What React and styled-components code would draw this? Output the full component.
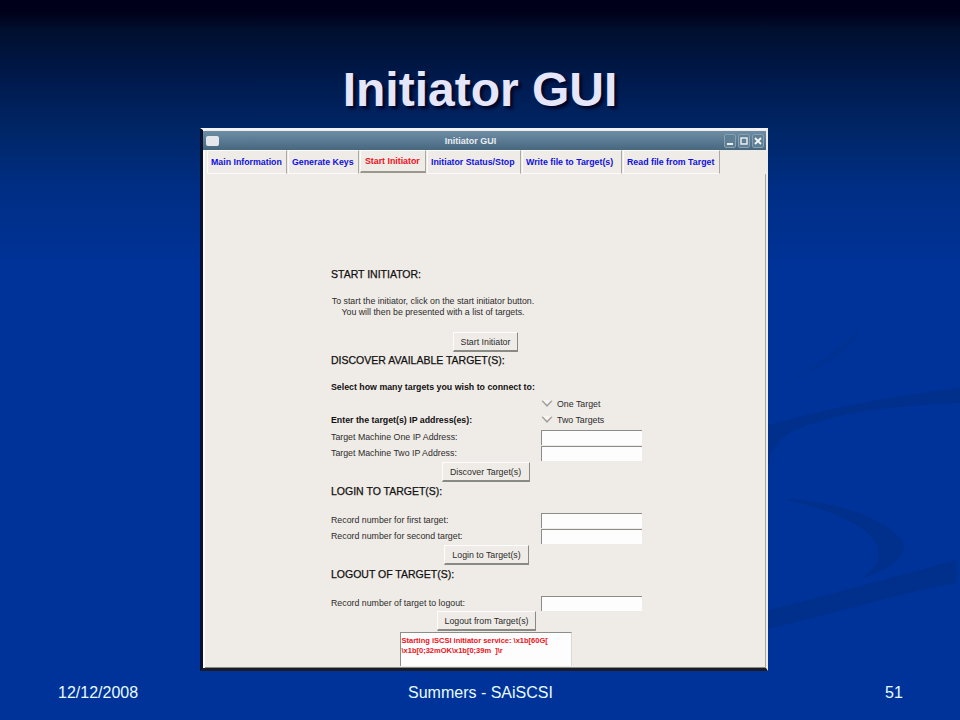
import React from "react";
import styled, { createGlobalStyle } from "styled-components";

const Global = createGlobalStyle`
  html, body { margin: 0; padding: 0; background: #003399; }
  * { box-sizing: border-box; }
`;

const Slide = styled.div`
  position: relative;
  width: 960px;
  height: 720px;
  overflow: hidden;
  display: flex;
  flex-direction: column;
  font-family: "Liberation Sans", Arial, sans-serif;
  background: linear-gradient(180deg, #00001a 0, #00001a 12px, #000f2e 30px, #001a4d 80px, #002666 130px, #002e85 190px, #003399 270px, #003399 100%);
`;
const Swirls = styled.svg`
  position: absolute;
  inset: 0;
`;
const Title = styled.h1`
  position: relative;
  margin: 0;
  height: 128px;
  padding-top: 60px;
  text-align: center;
  font-size: 48px;
  line-height: 60px;
  font-weight: 700;
  color: #e6e6fa;
  text-shadow: 3px 3px 3px #00072a;
`;
const Window = styled.div`
  position: relative;
  margin-left: 200px;
  width: 568px;
  height: 543px;
  background: #efebe6;
  border-top: 2px solid #f4f4f4;
  border-left: 3px solid #0a1030;
  border-right: 2px solid #efebe6;
  border-bottom: 3px solid #1c1c28;
  box-shadow: inset 2px 0 0 #fbfbf9, inset 0 -1px 0 #8a8a84;
  display: flex;
  flex-direction: column;
`;
const TitleBar = styled.div`
  height: 19px;
  margin-top: 1px;
  flex: none;
  display: flex;
  align-items: center;
  padding: 0 2px 0 3px;
  background: linear-gradient(180deg, #6d8ea6, #47677f);
`;
const MenuBtn = styled.div`
  width: 13px;
  height: 10px;
  border-radius: 2px;
  background: #e4e8ec;
`;
const TitleText = styled.div`
  flex: 1;
  text-align: center;
  font-size: 9px;
  font-weight: 700;
  color: #e8edf0;
`;
const WinBtn = styled.div`
  width: 12px;
  height: 14px;
  margin-left: 2px;
  border-radius: 2px;
  background: #5f7f96;
  border: 1px solid #86a0b2;
  display: flex;
  align-items: center;
  justify-content: center;
`;
const TabBar = styled.div`
  flex: none;
  height: 24px;
  display: flex;
  padding-left: 4px;
  gap: 1px;
`;
const Tab = styled.div`
  width: ${(p) => p.$w}px;
  height: ${(p) => (p.$active ? 23 : 24)}px;
  display: flex;
  align-items: center;
  padding-left: ${(p) => (p.$active ? 4 : 3)}px;
  font-size: 8.8px;
  font-weight: 700;
  white-space: nowrap;
  color: ${(p) => (p.$active ? "#f01020" : "#1010e0")};
  border-top: 1px solid #fbfbf9;
  border-left: 1px solid #fbfbf9;
  border-right: 1px solid #a8a8a4;
  border-bottom: ${(p) => (p.$active ? "2px solid #98988f" : "1px solid #fbfbf9")};
`;
const Body = styled.div`
  flex: 1;
  min-height: 0;
  margin-left: 4px;
  padding: 92px 125px 0 124px;
  border-right: 1px solid #a8a8a4;
`;
const Form = styled.div`
  width: 311px;
  display: flex;
  flex-direction: column;
  align-items: stretch;
  color: #2c2c2c;
  font-size: 8.8px;
`;
const Heading = styled.div`
  height: 16px;
  line-height: 16px;
  margin-top: ${(p) => p.$mt || 0}px;
  font-size: 10.5px;
  color: #111;
  -webkit-text-stroke: 0.25px #111;
`;
const Para = styled.div`
  width: 204px;
  margin-top: 13px;
  height: 23px;
  line-height: 11px;
  padding-top: 1px;
  text-align: center;
  white-space: nowrap;
`;
const Strong = styled.div`
  height: 14px;
  line-height: 14px;
  margin-top: ${(p) => p.$mt || 0}px;
  font-weight: 700;
  color: #111;
`;
const ActionButton = styled.div`
  align-self: center;
  width: ${(p) => p.$w}px;
  height: 20px;
  margin-top: ${(p) => p.$mt || 0}px;
  margin-right: ${(p) => p.$mr ?? 2}px;
  display: flex;
  align-items: center;
  justify-content: center;
  background: #efebe6;
  border-top: 1px solid #fdfdfb;
  border-left: 1px solid #fdfdfb;
  border-right: 1px solid #8a8a84;
  border-bottom: 2px solid #8a8a84;
`;
const FieldRow = styled.div`
  display: flex;
  align-items: center;
  height: ${(p) => p.$h || 16}px;
  margin-top: ${(p) => p.$mt || 0}px;
  justify-content: space-between;
`;
const FieldLabel = styled.span`
  font-weight: ${(p) => (p.$bold ? 700 : 400)};
  color: ${(p) => (p.$bold ? "#111" : "#2c2c2c")};
`;
const Input = styled.div`
  width: 101px;
  height: 15px;
  background: #fdfdfd;
  border-top: 1px solid #8c8c88;
  border-left: 1px solid #8c8c88;
`;
const RadioWrap = styled.div`
  width: 101px;
  display: flex;
  align-items: center;
  gap: 4px;
`;
const Output = styled.div`
  align-self: center;
  width: 172px;
  height: 34px;
  margin-top: 1px;
  margin-right: 2px;
  padding: 3px 1px;
  background: #fdfdfd;
  border-top: 1px solid #8c8c88;
  border-left: 1px solid #8c8c88;
  border-right: 1px solid #d8d8d4;
  color: #f01020;
  font-size: 7.5px;
  font-weight: 700;
  line-height: 9.5px;
  white-space: nowrap;
`;
const Footer = styled.div`
  position: relative;
  flex: 1;
  display: grid;
  grid-template-columns: 58px 350px 146px 331px 18px;
  padding-top: 11px;
  font-size: 16px;
  line-height: 22px;
  color: #e8fbff;
`;
const FooterCell = styled.span`
  grid-column: ${(p) => p.$col};
  white-space: nowrap;
`;

const Radio = () => (
  <svg width="12" height="8" viewBox="0 0 12 8">
    <path d="M0.5 1 L6 7 L11.5 1 L10 0.5 L6 4.5 L2 0.5Z" fill="#a0a09c" />
    <path d="M2 0.5 L6 4.5 L10 0.5 L6 -2Z" fill="#f6f4f0" />
  </svg>
);

export default function App() {
  return (
    <>
      <Global />
      <Slide>
        <Swirls width="960" height="720" viewBox="0 0 960 720">
          <g fill="#00308c">
            <path d="M768 425 C820 410 890 396 960 388 L960 403 C900 405 840 412 800 428 C775 438 768 455 768 475Z" />
            <path d="M783 499 C830 500 880 515 902 540 C910 555 890 570 862 578 C880 565 885 550 870 535 C850 518 815 505 783 499Z" />
            <path d="M768 610 C830 595 900 575 957 560 L957 583 C890 595 830 615 768 629Z" />
          </g>
          <path d="M860 327 C855 345 840 360 773 390 C810 368 840 350 860 327Z" fill="#003294" />
        </Swirls>
        <Title>Initiator GUI</Title>
        <Window>
          <TitleBar>
            <MenuBtn />
            <TitleText>Initiator GUI</TitleText>
            <WinBtn>
              <svg width="8" height="8" viewBox="0 0 8 8"><rect x="1" y="6" width="6" height="2" fill="#e8edf0" /></svg>
            </WinBtn>
            <WinBtn>
              <svg width="8" height="8" viewBox="0 0 8 8"><rect x="1" y="1" width="6" height="6" fill="none" stroke="#e8edf0" strokeWidth="1.5" /></svg>
            </WinBtn>
            <WinBtn>
              <svg width="8" height="8" viewBox="0 0 8 8"><path d="M1 1 L7 7 M7 1 L1 7" stroke="#f4f6f8" strokeWidth="1.8" /></svg>
            </WinBtn>
          </TitleBar>
          <TabBar>
            <Tab $w={80}>Main Information</Tab>
            <Tab $w={71}>Generate Keys</Tab>
            <Tab $w={66} $active>Start Initiator</Tab>
            <Tab $w={94}>Initiator Status/Stop</Tab>
            <Tab $w={100}>Write file to Target(s)</Tab>
            <Tab $w={97}>Read file from Target</Tab>
          </TabBar>
          <Body>
            <Form>
              <Heading>START INITIATOR:</Heading>
              <Para>
                To start the initiator, click on the start initiator button.
                <br />
                You will then be presented with a list of targets.
              </Para>
              <ActionButton $w={65} $mt={14}>Start Initiator</ActionButton>
              <Heading>DISCOVER AVAILABLE TARGET(S):</Heading>
              <Strong $mt={12}>Select how many targets you wish to connect to:</Strong>
              <FieldRow $h={14} $mt={3}>
                <span />
                <RadioWrap><Radio />One Target</RadioWrap>
              </FieldRow>
              <FieldRow $h={14} $mt={2}>
                <FieldLabel $bold>Enter the target(s) IP address(es):</FieldLabel>
                <RadioWrap><Radio />Two Targets</RadioWrap>
              </FieldRow>
              <FieldRow $mt={2}>
                <FieldLabel>Target Machine One IP Address:</FieldLabel>
                <Input />
              </FieldRow>
              <FieldRow>
                <FieldLabel>Target Machine Two IP Address:</FieldLabel>
                <Input />
              </FieldRow>
              <ActionButton $w={88} $mt={1}>Discover Target(s)</ActionButton>
              <Heading $mt={1}>LOGIN TO TARGET(S):</Heading>
              <FieldRow $mt={13}>
                <FieldLabel>Record number for first target:</FieldLabel>
                <Input />
              </FieldRow>
              <FieldRow>
                <FieldLabel>Record number for second target:</FieldLabel>
                <Input />
              </FieldRow>
              <ActionButton $w={85} $mt={1} $mr={0}>Login to Target(s)</ActionButton>
              <Heading $mt={1}>LOGOUT OF TARGET(S):</Heading>
              <FieldRow $mt={13}>
                <FieldLabel>Record number of target to logout:</FieldLabel>
                <Input />
              </FieldRow>
              <ActionButton $w={99} $mr={0}>Logout from Target(s)</ActionButton>
              <Output>
                Starting iSCSI initiator service: \x1b[60G[
                <br />
                \x1b[0;32mOK\x1b[0;39m&nbsp;&nbsp;]\r
              </Output>
            </Form>
          </Body>
        </Window>
        <Footer>
          <FooterCell $col={2}>12/12/2008</FooterCell>
          <FooterCell $col={3}>Summers - SAiSCSI</FooterCell>
          <FooterCell $col={5}>51</FooterCell>
        </Footer>
      </Slide>
    </>
  );
}
